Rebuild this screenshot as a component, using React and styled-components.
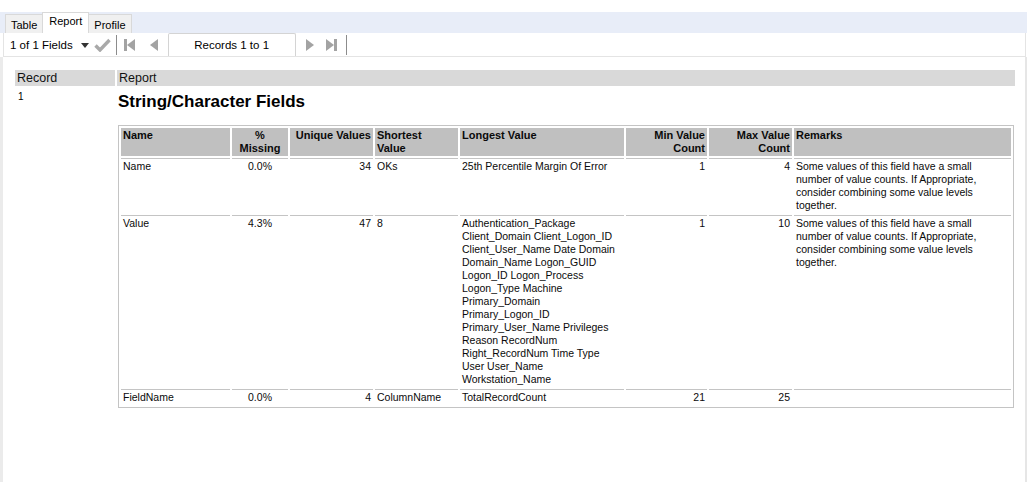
import React from 'react'
import styled, { createGlobalStyle } from 'styled-components'

const Global = createGlobalStyle`
	html, body {
		margin: 0;
		padding: 0;
		background: #fff;
	}
	body {
		font-family: "Liberation Sans", Arial, sans-serif;
		color: #000;
	}
`

const remarks = [
	'Some values of this field have a small',
	'number of value counts. If Appropriate,',
	'consider combining some value levels',
	'together.',
]

const rows = [
	{
		name: 'Name',
		missing: '0.0%',
		unique: '34',
		shortest: 'OKs',
		longest: ['25th Percentile Margin Of Error'],
		min: '1',
		max: '4',
		remarks,
	},
	{
		name: 'Value',
		missing: '4.3%',
		unique: '47',
		shortest: '8',
		longest: [
			'Authentication_Package',
			'Client_Domain Client_Logon_ID',
			'Client_User_Name Date Domain',
			'Domain_Name Logon_GUID',
			'Logon_ID Logon_Process',
			'Logon_Type Machine',
			'Primary_Domain',
			'Primary_Logon_ID',
			'Primary_User_Name Privileges',
			'Reason RecordNum',
			'Right_RecordNum Time Type',
			'User User_Name',
			'Workstation_Name',
		],
		min: '1',
		max: '10',
		remarks,
	},
	{
		name: 'FieldName',
		missing: '0.0%',
		unique: '4',
		shortest: 'ColumnName',
		longest: ['TotalRecordCount'],
		min: '21',
		max: '25',
		remarks: [],
	},
]

const Lines = ({ items }) =>
	items.map((t, i) => (
		<React.Fragment key={i}>
			{i > 0 && <br />}
			{t}
		</React.Fragment>
	))

const CheckIcon = () => (
	<svg width="17" height="14" viewBox="0 0 17 14">
		<path d="M1.5 7.5 L6 12 L15.5 2" fill="none" stroke="#a9a9a9" strokeWidth="3.4" />
	</svg>
)

const FirstIcon = () => (
	<svg width="11" height="12" viewBox="0 0 11 12">
		<rect x="0" y="0" width="3" height="12" fill="#a3a3a3" />
		<path d="M11 0 L3 6 L11 12 Z" fill="#a3a3a3" />
	</svg>
)

const PrevIcon = () => (
	<svg width="8" height="12" viewBox="0 0 8 12">
		<path d="M8 0 L0 6 L8 12 Z" fill="#a3a3a3" />
	</svg>
)

const NextIcon = () => (
	<svg width="8" height="12" viewBox="0 0 8 12">
		<path d="M0 0 L8 6 L0 12 Z" fill="#a3a3a3" />
	</svg>
)

const LastIcon = () => (
	<svg width="11" height="12" viewBox="0 0 11 12">
		<path d="M0 0 L8 6 L0 12 Z" fill="#a3a3a3" />
		<rect x="8" y="0" width="3" height="12" fill="#a3a3a3" />
	</svg>
)

const Caret = () => (
	<svg width="8" height="5" viewBox="0 0 8 5">
		<path d="M0 0 L8 0 L4 5 Z" fill="#333" />
	</svg>
)

const App = () => {
	return (
		<Window>
			<Global />
			<TopGap />
			<TabStrip>
				<Tab>Table</Tab>
				<Tab $active>Report</Tab>
				<Tab>Profile</Tab>
			</TabStrip>
			<Toolbar>
				<FieldPicker>
					1 of 1 Fields
					<Caret />
				</FieldPicker>
				<IconButton $ml={5}><CheckIcon /></IconButton>
				<Separator $ml={5} />
				<IconButton $ml={7}><FirstIcon /></IconButton>
				<IconButton $ml={15}><PrevIcon /></IconButton>
				<RecordBox>Records 1 to 1</RecordBox>
				<IconButton $ml={10}><NextIcon /></IconButton>
				<IconButton $ml={12}><LastIcon /></IconButton>
				<Separator $ml={9} />
			</Toolbar>
			<Content>
				<ReportGrid>
					<ColHead>Record</ColHead>
					<ColHead>Report</ColHead>
					<RecordNum>1</RecordNum>
					<ReportBody>
						<Title>String/Character Fields</Title>
						<FieldTable>
							<colgroup>
								<col style={{ width: 109 }} />
								<col style={{ width: 56 }} />
								<col style={{ width: 83 }} />
								<col style={{ width: 83 }} />
								<col style={{ width: 164 }} />
								<col style={{ width: 81 }} />
								<col style={{ width: 83 }} />
								<col style={{ width: 217 }} />
							</colgroup>
							<thead>
								<tr>
									<HeadCell>Name</HeadCell>
									<HeadCell $align="center">%<br />Missing</HeadCell>
									<HeadCell $align="right">Unique Values</HeadCell>
									<HeadCell>Shortest<br />Value</HeadCell>
									<HeadCell>Longest Value</HeadCell>
									<HeadCell $align="right">Min Value<br />Count</HeadCell>
									<HeadCell $align="right">Max Value<br />Count</HeadCell>
									<HeadCell>Remarks</HeadCell>
								</tr>
							</thead>
							<tbody>
								{rows.map((r) => (
									<tr key={r.name}>
										<Cell>{r.name}</Cell>
										<Cell $align="center">{r.missing}</Cell>
										<Cell $align="right">{r.unique}</Cell>
										<Cell>{r.shortest}</Cell>
										<Cell><Lines items={r.longest} /></Cell>
										<Cell $align="right">{r.min}</Cell>
										<Cell $align="right">{r.max}</Cell>
										<Cell><Lines items={r.remarks} /></Cell>
									</tr>
								))}
							</tbody>
						</FieldTable>
					</ReportBody>
				</ReportGrid>
			</Content>
		</Window>
	)
}

export default App

const Window = styled.div`
	width: 1027px;
	height: 482px;
	display: flex;
	flex-direction: column;
	overflow: hidden;
	background: #fff;
`

const TopGap = styled.div`
	height: 12px;
	flex: none;
`

const TabStrip = styled.div`
	height: 21px;
	flex: none;
	display: flex;
	align-items: flex-end;
	padding-left: 5px;
	background: #e8edf8;
`

const Tab = styled.div`
	height: ${(p) => (p.$active ? '21px' : '19px')};
	box-sizing: border-box;
	padding: ${(p) => (p.$active ? '1px 6px 0 6px' : '3px 5px 0 5px')};
	margin: ${(p) => (p.$active ? '0 -1px' : '0')};
	font-size: 11px;
	line-height: 15px;
	color: #000;
	background: ${(p) => (p.$active ? '#fff' : '#f0f0f0')};
	border: 1px solid #d9d9d9;
	border-bottom: none;
	position: relative;
	z-index: ${(p) => (p.$active ? 1 : 0)};
`

const Toolbar = styled.div`
	height: 24px;
	flex: none;
	display: flex;
	align-items: center;
	box-sizing: border-box;
	border-bottom: 1px solid #e4e4e4;
	border-left: 1px solid #e4e4e4;
	border-right: 1px solid #e4e4e4;
	margin: 0 1px 0 3px;
	padding-left: 6px;
	font-size: 11.5px;
`

const FieldPicker = styled.div`
	display: flex;
	align-items: center;
	gap: 8px;

	svg {
		margin-top: 1px;
	}
`

const IconButton = styled.div`
	height: 22px;
	display: flex;
	align-items: center;
	margin-left: ${(p) => p.$ml}px;
`

const Separator = styled.div`
	width: 1px;
	height: 20px;
	background: #8c8c8c;
	margin-left: ${(p) => p.$ml}px;
`

const RecordBox = styled.div`
	width: 128px;
	height: 23px;
	box-sizing: border-box;
	align-self: flex-end;
	margin-left: 10px;
	border: 1px solid #d4d4d4;
	border-bottom: none;
	border-radius: 2px 2px 0 0;
	display: flex;
	align-items: center;
	justify-content: center;
	font-size: 11.5px;
`

const Content = styled.div`
	flex: 1;
	border-left: 3px solid #ebebeb;
	border-right: 2px solid #e6e6e6;
	padding: 13px 10px 0 12px;
`

const ReportGrid = styled.div`
	display: grid;
	grid-template-columns: 100px 1fr;
	column-gap: 2px;
	align-items: start;
`

const ColHead = styled.div`
	height: 16px;
	background: #d9d9d9;
	font-size: 12.5px;
	line-height: 16px;
	padding-left: 2px;
	color: #111;
`

const RecordNum = styled.div`
	font-size: 10px;
	padding: 5px 0 0 3px;
`

const ReportBody = styled.div`
	padding-left: 1px;
`

const Title = styled.div`
	font-weight: bold;
	font-size: 17px;
	line-height: 20px;
	margin-top: 6px;
	margin-bottom: 13px;
	color: #000;
`

const FieldTable = styled.table`
	width: 896px;
	table-layout: fixed;
	border-collapse: separate;
	border-spacing: 2px;
	border: 1px solid #c4c4c4;
	font-size: 10.5px;
	line-height: 13px;
	color: #0a0a0a;
`

const HeadCell = styled.th`
	background: #c0c0c0;
	font-weight: bold;
	font-size: 11px;
	text-align: ${(p) => p.$align || 'left'};
	vertical-align: top;
	padding: 1px 2px;
	white-space: nowrap;
`

const Cell = styled.td`
	border-top: 1px solid #c4c4c4;
	text-align: ${(p) => p.$align || 'left'};
	vertical-align: top;
	padding: 1px 2px;
	white-space: nowrap;
`
